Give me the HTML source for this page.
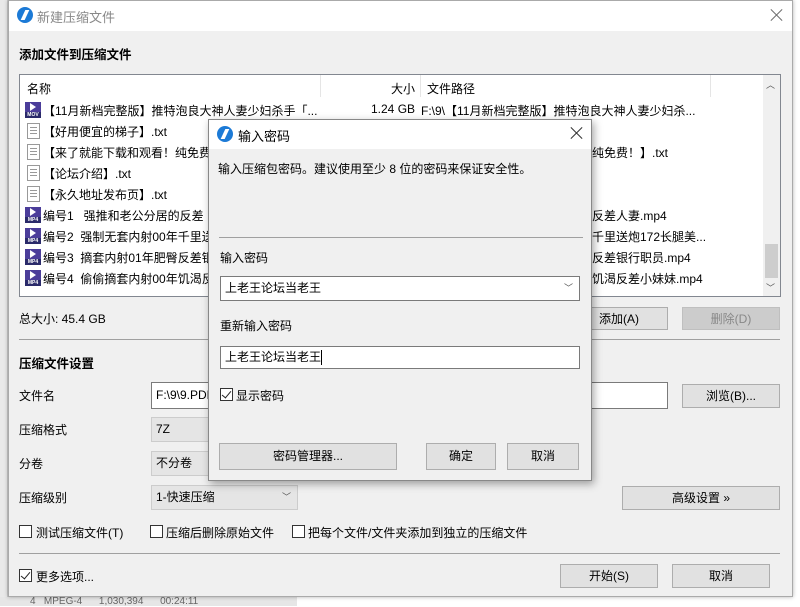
<!DOCTYPE html>
<html><head><meta charset="utf-8"><style>
*{box-sizing:border-box;margin:0;padding:0}
body{width:800px;height:606px;position:relative;overflow:hidden;background:#fff;font-family:"Liberation Sans","Noto Sans CJK SC",sans-serif;font-size:12px;color:#000}
.a{position:absolute;white-space:nowrap}
.btn{position:absolute;background:#e1e1e1;border:1px solid #adadad;text-align:center;line-height:22px}
.in{position:absolute;background:#fff;border:1px solid #7a7a7a;padding-left:4px}
.cb{position:absolute;width:13px;height:13px;border:1px solid #333;background:#fff}
.ck::after{content:"";position:absolute;left:3px;top:0px;width:4px;height:8px;border:solid #222;border-width:0 1.5px 1.5px 0;transform:rotate(40deg)}
.ic{position:absolute;width:16px;height:16px;border-radius:50%;background:#1c7ad6}
.ic::after{content:"";position:absolute;left:6px;top:3px;width:4px;height:10px;background:#fff;transform:skewX(-25deg)}
.mp{position:absolute;width:16px;height:16px;background:#4b3d9a}
.mp b{position:absolute;left:0;bottom:0;width:16px;height:6px;background:#2a2a6a;color:#fff;font-size:5px;line-height:6px;text-align:center;font-weight:bold}
.mp i{position:absolute;left:5px;top:1px;border-left:6px solid #fff;border-top:4px solid transparent;border-bottom:4px solid transparent}
.tx{position:absolute;width:13px;height:16px;border:1px solid #999;background:#fff}
.tx::after{content:"";position:absolute;left:2px;top:3px;width:7px;height:8px;background:repeating-linear-gradient(#999 0 1px,transparent 1px 3px)}
.x{position:absolute;width:14px;height:14px}
.x::before,.x::after{content:"";position:absolute;left:6px;top:-1px;width:1px;height:16px;background:#333;transform:rotate(45deg)}
.x::after{transform:rotate(-45deg)}
</style></head><body>
<div class="a" style="left:0;top:0;width:8px;height:606px;background:#e9e9e9;border-right:1px solid #ccc"></div>
<div class="a" style="left:0;top:597px;width:297px;height:9px;background:#e6e6e6"></div>
<div class="a" style="left:30px;top:598px;font-size:10px;color:#666;line-height:8px">4 &nbsp; MPEG-4 &nbsp;&nbsp;&nbsp;&nbsp; 1,030,394 &nbsp;&nbsp;&nbsp;&nbsp; 00:24:11</div>
<div class="a" style="left:8px;top:0;width:785px;height:597px;background:#f0f0f0;border:1px solid #aaa;box-shadow:0 0 4px rgba(0,0,0,.3)"></div>
<div class="a" style="left:9px;top:1px;width:783px;height:30px;background:#fff"></div>
<div class="ic" style="left:17px;top:7px"></div>
<div class="a" style="left:37px;top:7px;color:#888;font-size:13px">新建压缩文件</div>
<div class="x" style="left:770px;top:8px;opacity:.7"></div>
<div class="a" style="left:19px;top:44px;font-weight:bold;font-size:12.5px">添加文件到压缩文件</div>
<div class="a" style="left:19px;top:74px;width:762px;height:223px;background:#fff;border:1px solid #828790"></div>
<div class="a" style="left:320px;top:75px;width:1px;height:22px;background:#e5e5e5"></div>
<div class="a" style="left:420px;top:75px;width:1px;height:22px;background:#e5e5e5"></div>
<div class="a" style="left:710px;top:75px;width:1px;height:22px;background:#e5e5e5"></div>
<div class="a" style="left:27px;top:80px">名称</div>
<div class="a" style="left:391px;top:80px">大小</div>
<div class="a" style="left:427px;top:80px">文件路径</div>
<div class="a" style="left:763px;top:75px;width:17px;height:221px;background:#f0f0f0"></div>
<div class="a" style="left:765px;top:244px;width:13px;height:34px;background:#cdcdcd"></div>
<div class="a" style="left:766px;top:78px;font-size:9px;color:#555">︿</div>
<div class="a" style="left:766px;top:281px;font-size:9px;color:#555">﹀</div>
<div class="mp" style="left:25px;top:102px"><i></i><b>MOV</b></div>
<div class="a" style="left:43px;top:102px">【11月新档完整版】推特泡良大神人妻少妇杀手「...</div>
<div class="a" style="left:371px;top:102px">1.24 GB</div>
<div class="a" style="left:421px;top:102px">F:\9\【11月新档完整版】推特泡良大神人妻少妇杀...</div>
<div class="tx" style="left:27px;top:123px"></div><div class="a" style="left:43px;top:123px">【好用便宜的梯子】.txt</div>
<div class="tx" style="left:27px;top:144px"></div><div class="a" style="left:43px;top:144px">【来了就能下载和观看！纯免费</div>
<div class="a" style="left:592px;top:144px">纯免费！】.txt</div>
<div class="tx" style="left:27px;top:165px"></div><div class="a" style="left:43px;top:165px">【论坛介绍】.txt</div>
<div class="tx" style="left:27px;top:186px"></div><div class="a" style="left:43px;top:186px">【永久地址发布页】.txt</div>
<div class="mp" style="left:25px;top:207px"><i></i><b>MP4</b></div><div class="a" style="left:43px;top:207px">编号1 &nbsp; 强推和老公分居的反差</div><div class="a" style="left:592px;top:207px">反差人妻.mp4</div>
<div class="mp" style="left:25px;top:228px"><i></i><b>MP4</b></div><div class="a" style="left:43px;top:228px">编号2 &nbsp;强制无套内射00年千里送</div><div class="a" style="left:592px;top:228px">千里送炮172长腿美...</div>
<div class="mp" style="left:25px;top:249px"><i></i><b>MP4</b></div><div class="a" style="left:43px;top:249px">编号3 &nbsp;摘套内射01年肥臀反差银</div><div class="a" style="left:592px;top:249px">反差银行职员.mp4</div>
<div class="mp" style="left:25px;top:270px"><i></i><b>MP4</b></div><div class="a" style="left:43px;top:270px">编号4 &nbsp;偷偷摘套内射00年饥渴反</div><div class="a" style="left:592px;top:270px">饥渴反差小妹妹.mp4</div>
<div class="a" style="left:19px;top:310px">总大小: 45.4 GB</div>
<div class="btn" style="left:570px;top:307px;width:98px;height:23px">添加(A)</div>
<div class="btn" style="left:682px;top:307px;width:98px;height:23px;background:#ccc;border-color:#bfbfbf;color:#888">删除(D)</div>
<div class="a" style="left:19px;top:339px;width:761px;height:1px;background:#a0a0a0"></div>
<div class="a" style="left:19px;top:353px;font-weight:bold;font-size:12.5px">压缩文件设置</div>
<div class="a" style="left:19px;top:387px">文件名</div>
<div class="in" style="left:151px;top:382px;width:517px;height:27px;line-height:25px">F:\9\9.PDF</div>
<div class="btn" style="left:682px;top:384px;width:98px;height:24px">浏览(B)...</div>
<div class="a" style="left:19px;top:421px">压缩格式</div>
<div class="in" style="left:151px;top:417px;width:147px;height:25px;line-height:23px;background:#e5e5e5;border-color:#ccc">7Z</div>
<div class="a" style="left:19px;top:455px">分卷</div>
<div class="in" style="left:151px;top:451px;width:147px;height:25px;line-height:23px;background:#e5e5e5;border-color:#ccc">不分卷</div>
<div class="a" style="left:19px;top:489px">压缩级别</div>
<div class="in" style="left:151px;top:485px;width:147px;height:25px;line-height:23px;background:#e5e5e5;border-color:#ccc">1-快速压缩<span style="position:absolute;right:6px;color:#555;font-size:9px">﹀</span></div>
<div class="btn" style="left:622px;top:486px;width:158px;height:24px">高级设置 »</div>
<div class="cb" style="left:19px;top:525px"></div><div class="a" style="left:36px;top:524px">测试压缩文件(T)</div>
<div class="cb" style="left:150px;top:525px"></div><div class="a" style="left:166px;top:524px">压缩后删除原始文件</div>
<div class="cb" style="left:292px;top:525px"></div><div class="a" style="left:308px;top:524px">把每个文件/文件夹添加到独立的压缩文件</div>
<div class="a" style="left:19px;top:553px;width:761px;height:1px;background:#a0a0a0"></div>
<div class="cb ck" style="left:19px;top:569px"></div><div class="a" style="left:36px;top:568px">更多选项...</div>
<div class="btn" style="left:560px;top:564px;width:98px;height:24px">开始(S)</div>
<div class="btn" style="left:672px;top:564px;width:98px;height:24px">取消</div>
<div class="a" style="left:208px;top:119px;width:384px;height:362px;background:#f0f0f0;border:1px solid #888;box-shadow:2px 3px 8px rgba(0,0,0,.35)"></div>
<div class="a" style="left:209px;top:120px;width:382px;height:29px;background:#fff"></div>
<div class="ic" style="left:217px;top:126px"></div>
<div class="a" style="left:238px;top:126px;font-size:13px">输入密码</div>
<div class="x" style="left:570px;top:126px"></div>
<div class="a" style="left:218px;top:160px">输入压缩包密码。建议使用至少 8 位的密码来保证安全性。</div>
<div class="a" style="left:219px;top:237px;width:364px;height:1px;background:#a0a0a0"></div>
<div class="a" style="left:220px;top:249px">输入密码</div>
<div class="in" style="left:220px;top:276px;width:360px;height:25px;line-height:23px">上老王论坛当老王<span style="position:absolute;right:6px;color:#555;font-size:9px">﹀</span></div>
<div class="a" style="left:220px;top:317px">重新输入密码</div>
<div class="in" style="left:220px;top:346px;width:360px;height:23px;line-height:21px">上老王论坛当老王<span style="display:inline-block;width:1px;height:15px;background:#000;vertical-align:middle"></span></div>
<div class="cb ck" style="left:220px;top:388px"></div><div class="a" style="left:236px;top:387px">显示密码</div>
<div class="btn" style="left:219px;top:443px;width:178px;height:27px;line-height:25px">密码管理器...</div>
<div class="btn" style="left:426px;top:443px;width:70px;height:27px;line-height:25px">确定</div>
<div class="btn" style="left:507px;top:443px;width:72px;height:27px;line-height:25px">取消</div>
</body></html>
